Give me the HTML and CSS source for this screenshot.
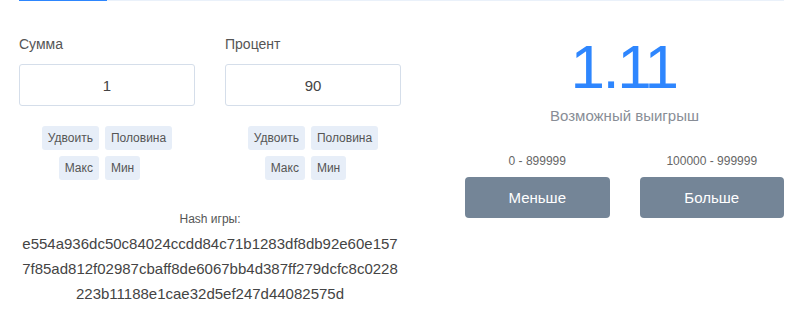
FILE: index.html
```html
<!DOCTYPE html>
<html lang="ru">
<head>
<meta charset="utf-8">
<link rel="stylesheet" href="styles.css">
</head>
<body>
<div class="page">
  <div class="tabs"><div class="tab-active"></div><div class="tab-rest"></div></div>
  <div class="main">
    <div class="left">
      <div class="fields">
        <div class="field">
          <div class="label">Сумма</div>
          <div class="input">1</div>
          <div class="chips">
            <span class="chip">Удвоить</span><span class="chip">Половина</span>
            <span class="chip">Макс</span><span class="chip">Мин</span>
          </div>
        </div>
        <div class="field">
          <div class="label">Процент</div>
          <div class="input">90</div>
          <div class="chips">
            <span class="chip">Удвоить</span><span class="chip">Половина</span>
            <span class="chip">Макс</span><span class="chip">Мин</span>
          </div>
        </div>
      </div>
      <div class="hash">
        <div class="hash-label">Hash игры:</div>
        <div class="hash-line">e554a936dc50c84024ccdd84c71b1283df8db92e60e157</div>
        <div class="hash-line">7f85ad812f02987cbaff8de6067bb4d387ff279dcfc8c0228</div>
        <div class="hash-line">223b11188e1cae32d5ef247d44082575d</div>
      </div>
    </div>
    <div class="right">
      <div class="coef">1.11</div>
      <div class="coef-label">Возможный выигрыш</div>
      <div class="bets">
        <div class="bet">
          <div class="range">0 - 899999</div>
          <div class="bet-btn">Меньше</div>
        </div>
        <div class="bet">
          <div class="range">100000 - 999999</div>
          <div class="bet-btn">Больше</div>
        </div>
      </div>
    </div>
  </div>
</div>
</body>
</html>
```
FILE: styles.css
```css
* { box-sizing: border-box; }
html, body { margin: 0; background: #fff; }
body { font-family: "Liberation Sans", Arial, sans-serif; color: #444; }
.page { padding: 0 26px 0 19px; }
.tabs { display: flex; height: 1px; }
.tab-active { width: 88px; background: #2d86fe; }
.tab-rest { flex: 1; background: #eaf1fa; }
.main { display: flex; justify-content: space-between; }
.left { width: 382px; }
.fields { display: grid; grid-template-columns: 176px 176px; column-gap: 30px; padding-top: 35px; }
.label { font-size: 14px; line-height: 16px; color: #555; }
.input { margin-top: 12px; height: 42px; border: 1px solid #d5deea; border-radius: 3px; display: flex; align-items: center; justify-content: center; font-size: 15px; color: #444; }
.chips { margin-top: 20px; display: grid; grid-template-columns: auto auto; justify-content: center; gap: 6px; }
.chip:nth-child(odd) { justify-self: end; }
.chip:nth-child(even) { justify-self: start; }
.chip { height: 24px; line-height: 24px; padding: 0 6px; background: #e7eef8; border-radius: 3px; font-size: 12px; color: #555; }
.hash { margin-top: 32px; text-align: center; }
.hash-label { font-size: 12px; line-height: 14px; color: #555; margin-bottom: 5px; }
.hash-line { font-size: 15px; line-height: 25px; color: #444; }
.right { width: 319px; display: flex; flex-direction: column; align-items: center; padding-top: 35px; }
.coef { font-size: 62px; line-height: 62px; letter-spacing: -2.5px; color: #2e86fe; margin-right: 2px; }
.coef-label { margin-top: 9px; font-size: 15px; line-height: 17px; color: #888d96; }
.bets { margin-top: 30px; display: flex; gap: 30px; width: 100%; }
.bet { flex: 1; display: flex; flex-direction: column; align-items: center; }
.range { font-size: 12px; line-height: 14px; color: #666; }
.bet-btn { margin-top: 9px; width: 100%; height: 41px; border-radius: 4px; background: #748597; color: #fff; font-size: 15px; display: flex; align-items: center; justify-content: center; }
```
